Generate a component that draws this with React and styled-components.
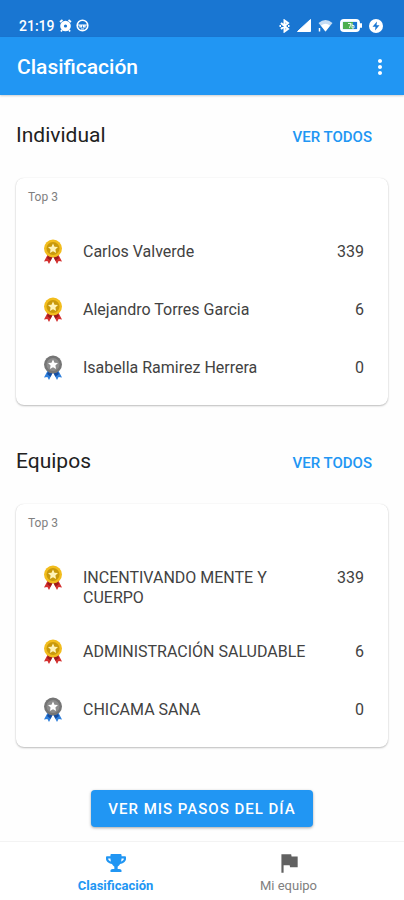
import React from 'react';
import styled, { createGlobalStyle } from 'styled-components';
import { MdFlag, MdMoreVert } from 'react-icons/md';
import { FaTrophy } from 'react-icons/fa';

const color = {
    primary: '#2196f3',
    primaryDark: '#1976d2',
    title: '#212121',
    text: '#424242',
    muted: '#808080',
};

const GlobalStyle = createGlobalStyle`
    * {
        box-sizing: border-box;
    }

    body {
        margin: 0;
        font-family: Roboto, "Liberation Sans", sans-serif;
        color: ${color.text};
        background: #fefefe;
    }
`;

const Page = styled.div`
    display: flex;
    flex-direction: column;
    min-height: 100vh;
`;

const StatusBar = styled.div`
    display: flex;
    height: 37px;
    padding: 14px 21px 0 19px;
    align-items: center;
    justify-content: space-between;
    font-size: 14px;
    font-weight: 500;
    color: #fff;
    background: ${color.primaryDark};
`;

const StatusGroup = styled.div`
    display: flex;
    gap: ${props => props.$gap}px;
    align-items: center;

    svg {
        display: block;
    }
`;

const AppBar = styled.header`
    display: flex;
    height: 58px;
    padding: 2px 12px 0 17px;
    align-items: center;
    justify-content: space-between;
    color: #fff;
    background: ${color.primary};
    box-shadow: 0 1px 2px rgba(0, 0, 0, .2);

    h1 {
        margin: 0;
        font-size: 21px;
        font-weight: 500;
    }
`;

const MenuButton = styled.button`
    display: flex;
    width: 24px;
    height: 40px;
    padding: 0;
    align-items: center;
    justify-content: center;
    color: #fff;
    border: 0;
    background: none;
`;

const Main = styled.main`
    display: flex;
    flex: 1;
    flex-direction: column;
    gap: 32px;
    padding: 16px 16px 13px;
`;

const SectionHeader = styled.div`
    display: flex;
    height: 48px;
    margin-bottom: 19px;
    align-items: center;
    justify-content: space-between;

    h2 {
        margin: 0;
        font-size: 21px;
        font-weight: 400;
        color: ${color.title};
    }
`;

const TextButton = styled.button`
    height: 36px;
    padding: 3px 16px 0;
    font-family: inherit;
    font-size: 15px;
    font-weight: 500;
    color: ${color.primary};
    border: 0;
    background: none;
`;

const Card = styled.div`
    padding: 9px 12px 8px;
    border-radius: 8px;
    background: #fff;
    box-shadow: 0 1px 2px rgba(0, 0, 0, .25), 0 0 1px rgba(0, 0, 0, .12);
`;

const Caption = styled.p`
    margin: 0 0 16px;
    font-size: 12px;
    line-height: 20px;
    color: ${color.muted};
`;

const List = styled.ol`
    margin: 0;
    padding: 0;
    list-style: none;
`;

const Row = styled.li`
    display: flex;
    min-height: 58px;
    padding: 19px 12px 15px 15px;
    align-items: flex-start;
    font-size: 16px;
    line-height: 20px;

    svg {
        flex: none;
        margin: -3px 20px 0 0;
    }

    span {
        flex: 1;
        margin-right: 48px;
    }

    strong {
        font-weight: 400;
    }
`;

const StepsButton = styled.button`
    align-self: center;
    height: 37px;
    margin-top: 11px;
    padding: 0 17px;
    font-family: inherit;
    font-size: 15px;
    font-weight: 500;
    letter-spacing: 1px;
    color: #fff;
    border: 0;
    border-radius: 4px;
    background: ${color.primary};
    box-shadow: 0 1px 3px rgba(0, 0, 0, .35);
`;

const BottomNav = styled.nav`
    display: flex;
    height: 59px;
    justify-content: center;
    border-top: 1px solid #f3f3f3;
    background: #fff;
`;

const NavLink = styled.a`
    display: flex;
    flex: 0 1 173px;
    flex-direction: column;
    gap: 5px;
    padding-top: 11px;
    align-items: center;
    font-size: 13px;
    line-height: 16px;
    font-weight: ${props => (props.$active ? 700 : 400)};
    text-decoration: none;
    color: ${props => (props.$active ? color.primary : color.muted)};
`;

const NavIcon = styled.span`
    display: flex;
    height: 20px;
    align-items: center;
    color: ${props => (props.$active ? color.primary : '#616161')};
`;

const medalColors = {
    gold: { rim: '#f2bd1d', face: '#c9990c', star: '#fff3b8', ribbon: '#d32f2f', fold: '#9c1c1c' },
    silver: { rim: '#757575', face: '#8c8c8c', star: '#fff', ribbon: '#2f7fdb', fold: '#174ea0' },
};

const Medal = ({ type }) => {
    const c = medalColors[type];

    return (
        <svg width="20" height="26" viewBox="0 0 20 26" aria-hidden="true">
            <path d="M5 15L1 22.5L4.400 22L6 25L9.500 18Z" fill={c.ribbon} />
            <path d="M15 15L19 22.500L15.600 22L14 25L10.500 18Z" fill={c.ribbon} />
            <path d="M5 17L9.500 18L7.600 21.800L4 19Z" fill={c.fold} />
            <path d="M15 17L10.500 18L12.400 21.800L16 19Z" fill={c.fold} />
            <circle cx="10" cy="9.500" r="9" fill={c.rim} />
            <circle cx="10" cy="9.500" r="6.500" fill={c.face} />
            <path d="M10 4.500L11.500 7.700L15 8.100L12.400 10.500L13.100 14L10 12.300L6.900 14L7.600 10.500L5 8.100L8.500 7.700Z" fill={c.star} />
        </svg>
    );
};

const AlarmIcon = () => (
    <svg width="13" height="13" viewBox="0 0 13 13" aria-hidden="true">
        <path d="M1 3L3.500 1M12 3L9.500 1M3 11L2 12.500M10 11L11 12.500" stroke="#fff" strokeWidth="1.800" />
        <circle cx="6.500" cy="7" r="5.300" fill="#fff" />
        <circle cx="6.500" cy="7" r="1.600" fill={color.primaryDark} />
    </svg>
);

const FaceIcon = () => (
    <svg width="13" height="13" viewBox="0 0 13 13" fill="none" stroke="#fff" aria-hidden="true">
        <circle cx="6.500" cy="6.500" r="5.300" strokeWidth="1.600" />
        <path d="M2 6H11M4 6V8H5.500V6M7.500 6V8H9V6M5 10H8" strokeWidth="1.200" />
    </svg>
);

const BluetoothIcon = () => (
    <svg width="11" height="14" viewBox="0 0 11 14" fill="none" stroke="#fff" strokeWidth="2" aria-hidden="true">
        <path d="M2 4L9 10L5.500 12.500V1.500L9 4L2 10M.5 7H2M9 7H10.500" />
    </svg>
);

const SignalIcon = () => (
    <svg width="14" height="13" viewBox="0 0 14 13" aria-hidden="true">
        <path d="M13.500 .5V12.500H.5Z" fill="#fff" stroke="#fff" strokeLinejoin="round" />
    </svg>
);

const WifiIcon = () => (
    <svg width="15" height="13" viewBox="0 0 15 13" aria-hidden="true">
        <path d="M.5 4Q7.500 -2 14.500 4L7.500 12.500Z" fill="#fff" opacity=".75" />
        <path d="M3 6.500Q7.500 3 12 6.500L7.500 12.500Z" fill="#fff" />
        <path d="M1.500 9V12.500" stroke="#fff" strokeWidth="1.500" />
    </svg>
);

const BatteryIcon = () => (
    <svg width="22" height="13" viewBox="0 0 22 13" aria-hidden="true">
        <rect x="1" y="1" width="18" height="11" rx="3" fill="#e3f2fd" stroke="#fff" strokeWidth="2" />
        <rect x="3" y="3" width="10" height="7" fill="#4caf50" />
        <rect x="13" y="3" width="4" height="7" fill={color.primaryDark} />
        <rect x="20" y="4" width="2" height="5" rx="1" fill="#fff" />
        <path d="M8 4.500H11L9.500 9M12 4.500V9H14M12 6.500H14V9" fill="none" stroke="#e8f5e9" />
    </svg>
);

const ChargeIcon = () => (
    <svg width="14" height="14" viewBox="0 0 14 14" aria-hidden="true">
        <circle cx="7" cy="7" r="7" fill="#fff" />
        <path d="M8 2.500L3.500 7.700H6.500L6 11.500L10.500 6.300H7.500Z" fill={color.primaryDark} />
    </svg>
);

const sections = [
    {
        title: 'Individual',
        rows: [
            { name: 'Carlos Valverde', steps: 339, medal: 'gold' },
            { name: 'Alejandro Torres Garcia', steps: 6, medal: 'gold' },
            { name: 'Isabella Ramirez Herrera', steps: 0, medal: 'silver' },
        ],
    },
    {
        title: 'Equipos',
        rows: [
            { name: 'INCENTIVANDO MENTE Y CUERPO', steps: 339, medal: 'gold' },
            { name: 'ADMINISTRACIÓN SALUDABLE', steps: 6, medal: 'gold' },
            { name: 'CHICAMA SANA', steps: 0, medal: 'silver' },
        ],
    },
];

const Ranking = ({ title, rows }) => (
    <section>
        <SectionHeader>
            <h2>{title}</h2>
            <TextButton type="button">VER TODOS</TextButton>
        </SectionHeader>
        <Card>
            <Caption>Top 3</Caption>
            <List>
                {rows.map(row => (
                    <Row key={row.name}>
                        <Medal type={row.medal} />
                        <span>{row.name}</span>
                        <strong>{row.steps}</strong>
                    </Row>
                ))}
            </List>
        </Card>
    </section>
);

export default function App() {
    return (
        <Page>
            <GlobalStyle />
            <StatusBar>
                <StatusGroup $gap={4}>
                    21:19
                    <AlarmIcon />
                    <FaceIcon />
                </StatusGroup>
                <StatusGroup $gap={7}>
                    <BluetoothIcon />
                    <SignalIcon />
                    <WifiIcon />
                    <BatteryIcon />
                    <ChargeIcon />
                </StatusGroup>
            </StatusBar>
            <AppBar>
                <h1>Clasificación</h1>
                <MenuButton type="button" aria-label="Más opciones">
                    <MdMoreVert size={26} />
                </MenuButton>
            </AppBar>
            <Main>
                {sections.map(section => (
                    <Ranking key={section.title} {...section} />
                ))}
                <StepsButton type="button">VER MIS PASOS DEL DÍA</StepsButton>
            </Main>
            <BottomNav>
                <NavLink href="#clasificacion" $active>
                    <NavIcon $active><FaTrophy size={20} /></NavIcon>
                    Clasificación
                </NavLink>
                <NavLink href="#equipo">
                    <NavIcon><MdFlag size={26} /></NavIcon>
                    Mi equipo
                </NavLink>
            </BottomNav>
        </Page>
    );
}
